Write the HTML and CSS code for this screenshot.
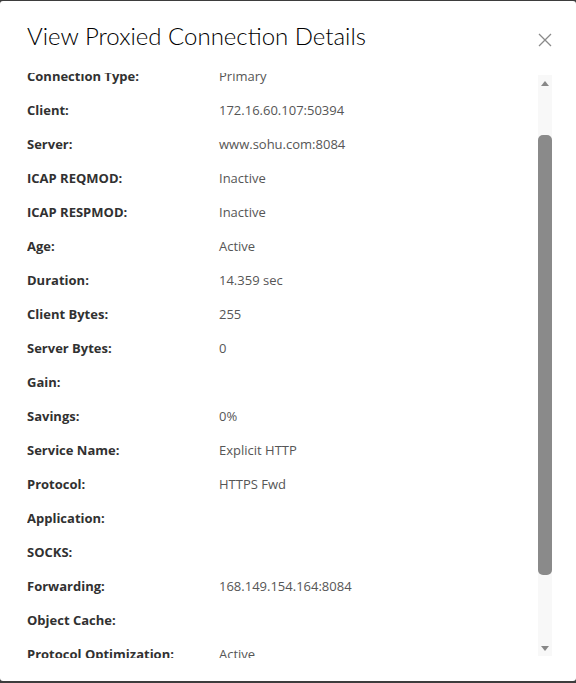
FILE: index.html
```html
<!DOCTYPE html>
<html>
<head>
<meta charset="utf-8">
<link rel="stylesheet" href="styles.css">
</head>
<body>
<div class="modal">
  <div class="modal-header">
    <h3 class="modal-title">View Proxied Connection Details</h3>
    <button class="close" aria-label="Close">
      <svg width="14" height="14" viewBox="0 0 14 14"><path d="M1 1L13 13M13 1L1 13" stroke="#8a8a8a" stroke-width="1.3" fill="none"/></svg>
    </button>
  </div>
  <div class="modal-body">
    <div class="viewport">
      <div class="list">
        <div class="row"><span class="label">Connection Type:</span><span class="value">Primary</span></div>
        <div class="row"><span class="label">Client:</span><span class="value">172.16.60.107:50394</span></div>
        <div class="row"><span class="label">Server:</span><span class="value">www.sohu.com:8084</span></div>
        <div class="row"><span class="label">ICAP REQMOD:</span><span class="value">Inactive</span></div>
        <div class="row"><span class="label">ICAP RESPMOD:</span><span class="value">Inactive</span></div>
        <div class="row"><span class="label">Age:</span><span class="value">Active</span></div>
        <div class="row"><span class="label">Duration:</span><span class="value">14.359 sec</span></div>
        <div class="row"><span class="label">Client Bytes:</span><span class="value">255</span></div>
        <div class="row"><span class="label">Server Bytes:</span><span class="value">0</span></div>
        <div class="row"><span class="label">Gain:</span><span class="value"></span></div>
        <div class="row"><span class="label">Savings:</span><span class="value">0%</span></div>
        <div class="row"><span class="label">Service Name:</span><span class="value">Explicit HTTP</span></div>
        <div class="row"><span class="label">Protocol:</span><span class="value">HTTPS Fwd</span></div>
        <div class="row"><span class="label">Application:</span><span class="value"></span></div>
        <div class="row"><span class="label">SOCKS:</span><span class="value"></span></div>
        <div class="row"><span class="label">Forwarding:</span><span class="value">168.149.154.164:8084</span></div>
        <div class="row"><span class="label">Object Cache:</span><span class="value"></span></div>
        <div class="row"><span class="label">Protocol Optimization:</span><span class="value">Active</span></div>
        <div class="row"><span class="label">&nbsp;</span><span class="value"></span></div>
      </div>
    </div>
    <div class="scrollbar">
      <div class="arrow up"></div>
      <div class="track">
        <div class="thumb"></div>
      </div>
      <div class="arrow down"></div>
    </div>
  </div>
</div>
</body>
</html>
```
FILE: styles.css
```css
html, body {
  margin: 0;
  padding: 0;
}
body {
  background: #3d3d3d;
  width: 576px;
  height: 683px;
  overflow: hidden;
  padding-top: 1px;
  box-sizing: border-box;
}
.modal {
  background: #fff;
  height: 680px;
  border-radius: 3px;
  box-sizing: border-box;
  display: flex;
  flex-direction: column;
}
.modal-header {
  display: flex;
  align-items: flex-start;
  justify-content: space-between;
  padding: 19px 24px 0 27px;
  height: 72px;
  flex: none;
  box-sizing: border-box;
}
.modal-title {
  margin: 0;
  font-family: "Lato", "Open Sans", sans-serif;
  font-weight: 300;
  font-size: 24px;
  line-height: 32px;
  color: #000;
}
.close {
  border: 0;
  background: none;
  padding: 0;
  margin-top: 13px;
  width: 14px;
  height: 14px;
  display: flex;
}
.modal-body {
  display: flex;
  height: 585px;
  flex: none;
  padding-left: 27px;
  padding-right: 24px;
}
.viewport {
  flex: 1;
  overflow: hidden;
}
.list {
  margin-top: -14px;
}
.row {
  display: flex;
  height: 34px;
  align-items: center;
  font-family: "Open Sans", sans-serif;
  font-size: 13px;
}
.label {
  width: 192px;
  font-weight: 700;
  color: #313131;
}
.value {
  color: #565656;
}
.scrollbar {
  width: 14px;
  display: flex;
  flex-direction: column;
  align-items: center;
  background: #f8f8f8;
  margin-top: 2px;
  margin-bottom: 2px;
}
.arrow {
  height: 16px;
  width: 14px;
  flex: none;
  display: flex;
  align-items: center;
  justify-content: center;
}
.arrow::before {
  content: "";
  border-left: 4px solid transparent;
  border-right: 4px solid transparent;
}
.arrow.up::before {
  border-bottom: 5px solid #888;
}
.arrow.down::before {
  border-top: 5px solid #888;
}
.track {
  flex: 1;
  width: 14px;
  display: flex;
  justify-content: center;
  padding-top: 44px;
  padding-bottom: 65px;
}
.thumb {
  width: 9px;
  border-radius: 5px;
  background: #8a8a8a;
  flex: 1;
}
```
